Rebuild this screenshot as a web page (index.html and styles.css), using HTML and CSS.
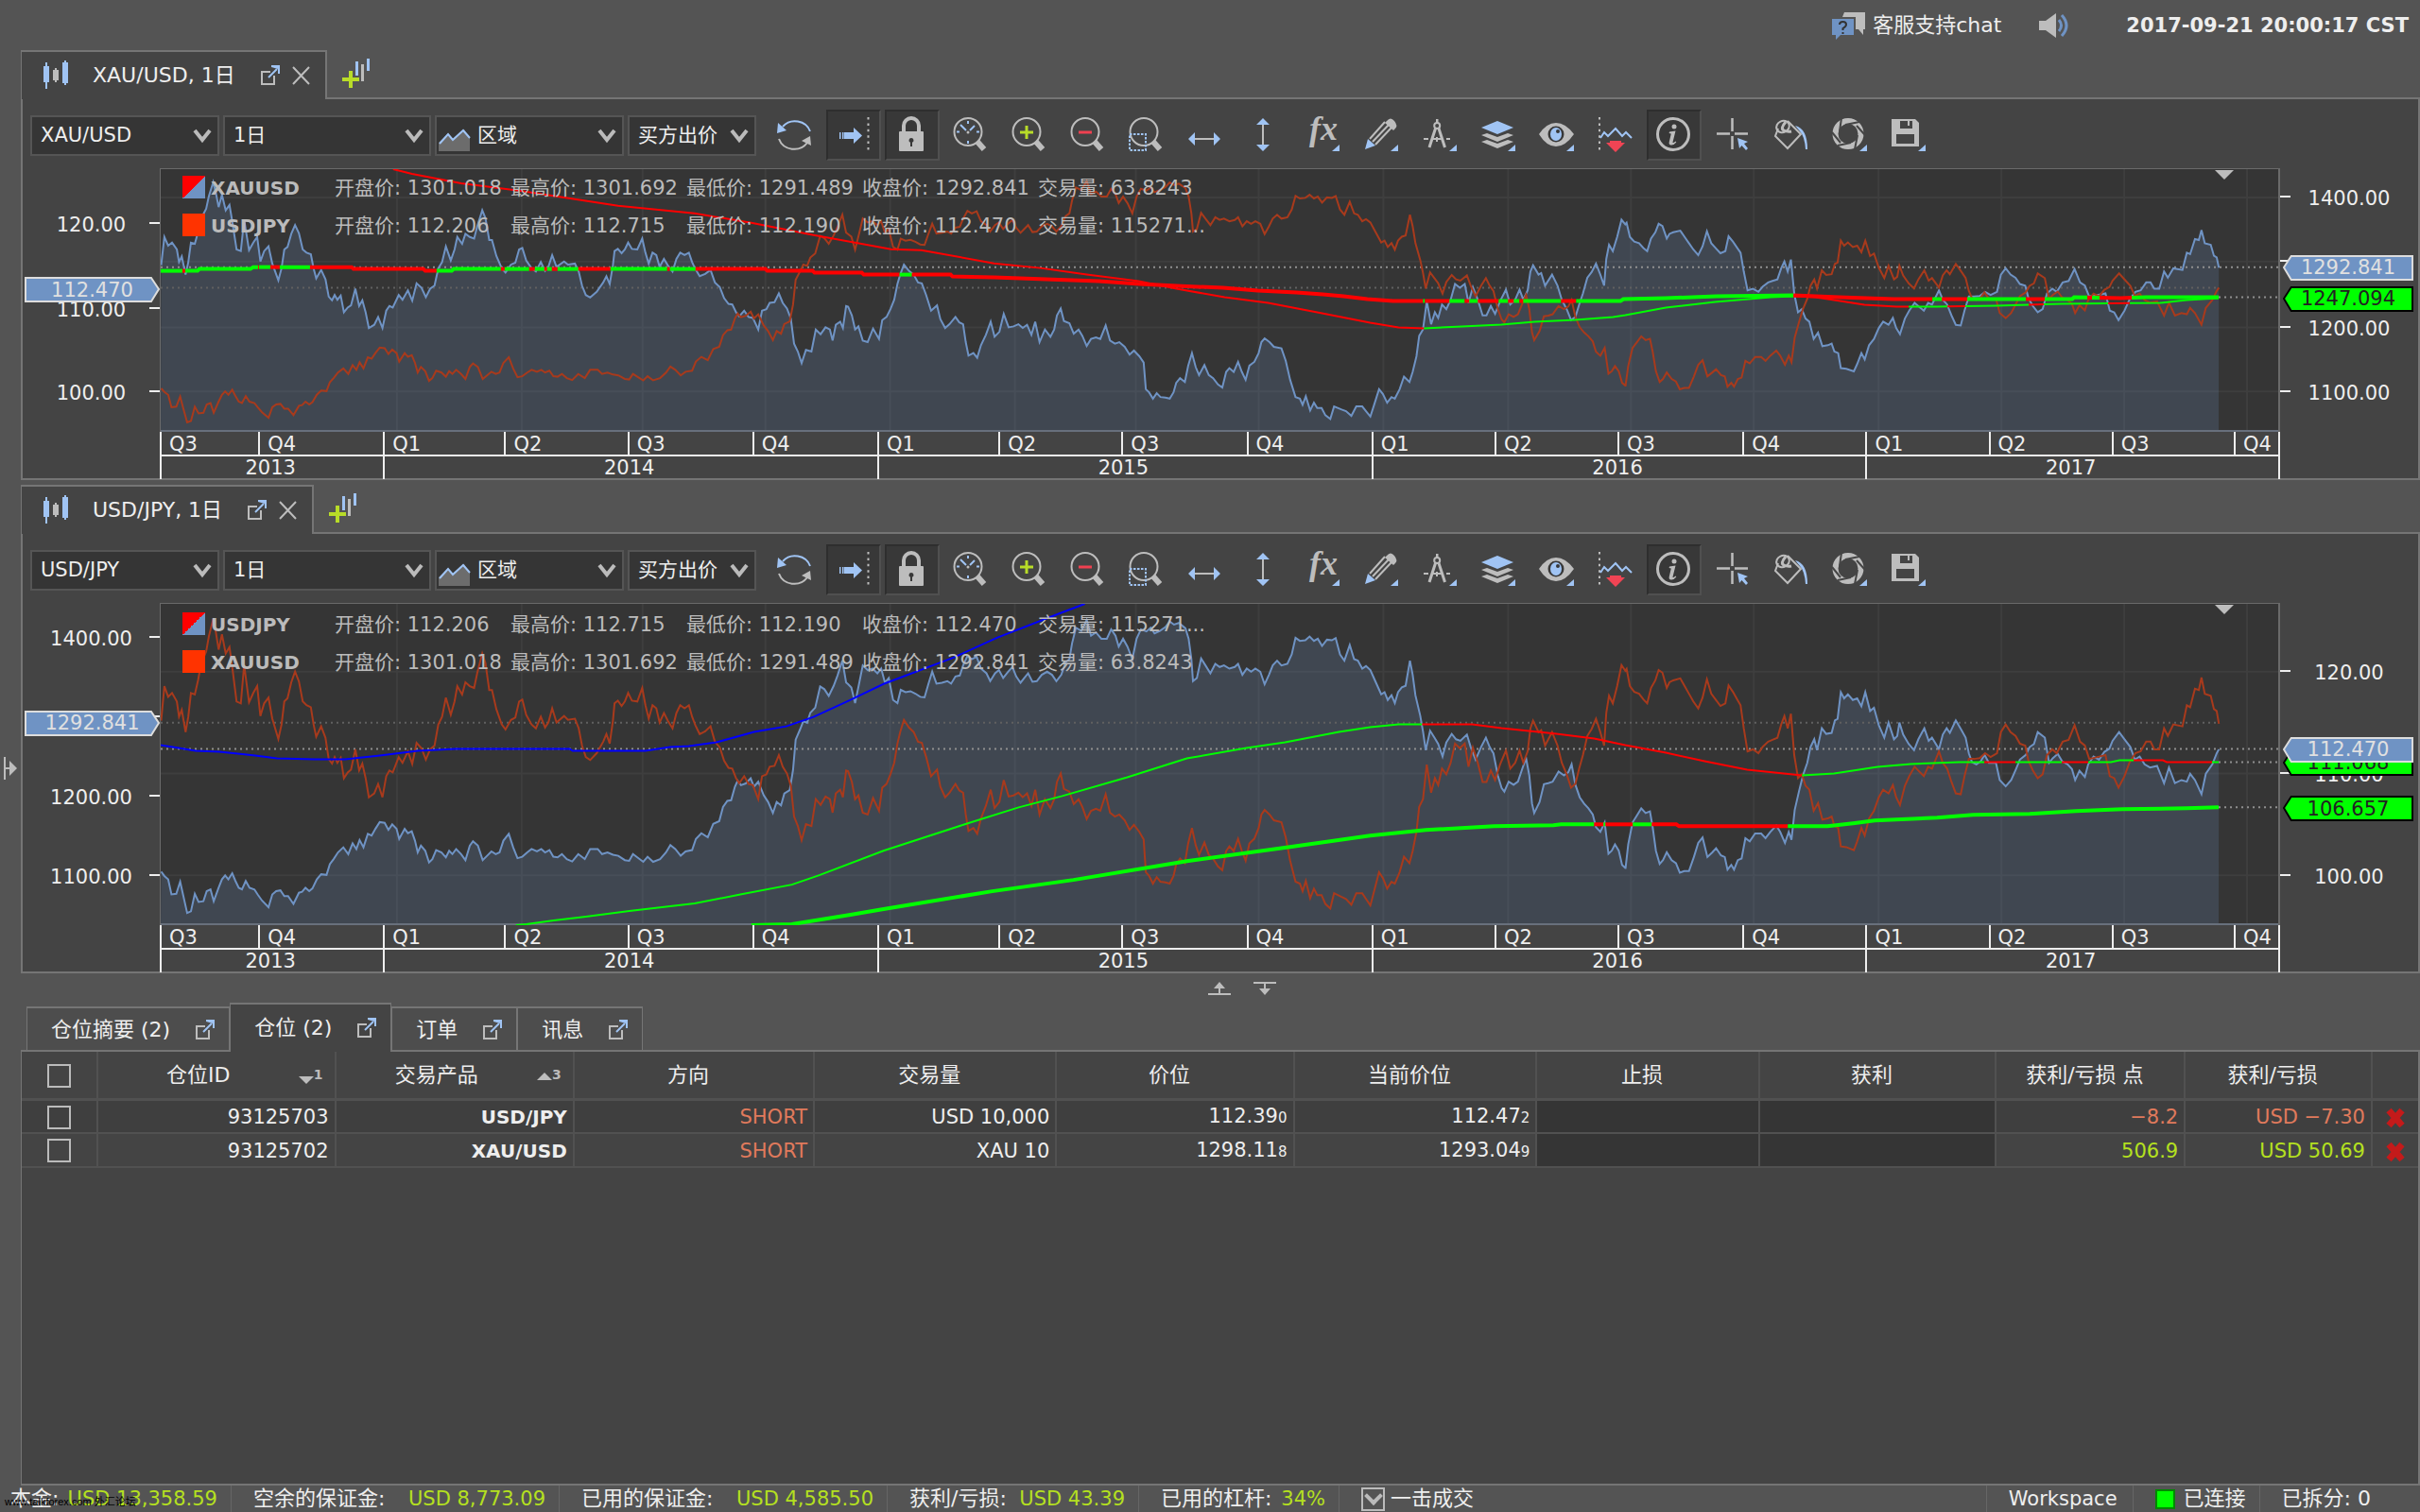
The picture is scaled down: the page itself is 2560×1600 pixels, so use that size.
FILE: index.html
```html
<!DOCTYPE html>
<html lang="zh-CN">
<head>
<meta charset="utf-8">
<title>Workspace</title>
<link rel="stylesheet" href="styles.css">
</head>
<body>
<svg class="sprite" aria-hidden="true">
  <symbol id="i-refresh" viewBox="0 0 36 36"><path class="sb" d="M34 14A17 16 0 0 0 5 9"/><path class="b" d="M0 5L-1 16L9 13Z"/><path class="sg" d="M1 22A17 16 0 0 0 31 26"/><path class="g" d="M34 19L35 29L25 24Z"/></symbol>
  <symbol id="i-shift" viewBox="0 0 36 36"><path class="b" d="M3 15h1.500v7H3zM6 15h1.500v7H6zM8 15h10V10l9 8.500L18 27v-5H8z"/><path class="sg" stroke-dasharray="2.500 3.900" d="M33.500-1V35"/></symbol>
  <symbol id="i-lock" viewBox="0 0 36 36"><rect class="g" x="4" y="14" width="26" height="21" rx="1"/><path class="sg" style="stroke-width:4" d="M9 14V8a8 8 0 0 1 16 0v6"/><path class="d" d="M17 21a2.500 2.500 0 0 1 1 4.800V30h-2v-4.200A2.500 2.500 0 0 1 17 21z"/></symbol>
  <symbol id="i-lens" viewBox="0 0 36 36"><circle class="sg" cx="15" cy="14.500" r="14.500"/><path class="sg" style="stroke-width:6" d="M25 25L32 33"/></symbol>
  <symbol id="i-time" viewBox="0 0 36 36"><use href="#i-lens"/><path class="sb" d="M7 7L13 13M17 13L22 8M15 3v3M15 24v3M3 14.500h3M24 14.500h3"/><circle class="g" cx="15" cy="15" r="1.500"/></symbol>
  <symbol id="i-zin" viewBox="0 0 36 36"><use href="#i-lens"/><path fill="none" stroke="#b8dc28" stroke-width="3" d="M8 15h14M15 8v14"/></symbol>
  <symbol id="i-zout" viewBox="0 0 36 36"><use href="#i-lens"/><path fill="none" stroke="#f04050" stroke-width="3" d="M8 15h14"/></symbol>
  <symbol id="i-zsel" viewBox="0 0 36 36"><use href="#i-lens"/><rect class="sb" stroke-dasharray="2.500 1.500" x="0" y="17" width="17" height="17"/></symbol>
  <symbol id="i-horiz" viewBox="0 0 36 36"><path class="sg" d="M6 22h23"/><path class="b" d="M0 22l7-7v14zM34 22l-7-7v14z"/></symbol>
  <symbol id="i-vert" viewBox="0 0 36 36"><path class="sg" d="M17 6v23"/><path class="b" d="M17 0l-7 7h14zM17 35l-7-7h14z"/></symbol>
  <symbol id="i-more" viewBox="0 0 36 36"><path class="b" d="M36 28v7h-8z"/></symbol>
  <symbol id="i-fx" viewBox="0 0 36 36"><text class="glyph" x="4" y="23" font-size="36">fx</text><use href="#i-more"/></symbol>
  <symbol id="i-pencil" viewBox="0 0 36 36"><path class="sg" d="M6 22L22 4M9 25L26 7M12 28L29 10"/><path class="g" d="M24 3q4-5 8 0t1 8l-2 2-9-8z"/><path class="b" d="M4 22l8 7L1 33z"/><use href="#i-more"/></symbol>
  <symbol id="i-compass" viewBox="0 0 36 36"><path class="g" d="M14 1h2.500v4H14z"/><circle class="sg" cx="15.200" cy="8" r="3"/><path class="sg" style="stroke-width:3" d="M13.500 11L7 31M17 11L23.500 31"/><path class="sg" d="M1 22h5M10 22h11M25 22h4M15 20v5"/><use href="#i-more"/></symbol>
  <symbol id="i-layers" viewBox="0 0 36 36"><path class="b" d="M17 3l17 7-17 7L0 10z"/><path class="g" d="M0 18l6-2 11 4 11-4 6 2-17 7zM0 25l6-2 11 4 11-4 6 2-17 7z"/><use href="#i-more"/></symbol>
  <symbol id="i-eye" viewBox="0 0 36 36"><path class="g" d="M-1 17Q7 5 17 5T36 17Q27 30 17 30T-1 17z"/><circle class="d" cx="17" cy="17" r="8.500"/><ellipse class="b" cx="17" cy="17" rx="6" ry="7"/><circle class="d" cx="19" cy="14" r="2"/><use href="#i-more"/></symbol>
  <symbol id="i-trend" viewBox="0 0 36 36"><path class="sg" stroke-dasharray="2.500 3.900" d="M1-1V35"/><path class="sb" d="M2 21l4-6 4 4 8-8 7 8 4-4 6 6"/><path fill="#f04454" d="M12 24h12v2h4L18 36 8 26h4z"/></symbol>
  <symbol id="i-info" viewBox="0 0 36 36"><circle class="sg" style="stroke-width:3" cx="17" cy="17" r="16.500"/><circle class="g" cx="18" cy="9" r="2.500"/><path class="g" d="M13 14.500l6.500-1-3 12q0 1.500 3-1l.8.900q-3 3.500-5.500 3.200-2.800-.4-2-3.500l2-8.500-2.200-.6z"/></symbol>
  <symbol id="i-cross" viewBox="0 0 36 36"><path class="sg" style="stroke-width:2.500" d="M17.500 0v14M17.500 19v14M1 16.500h14M20 16.500h14"/><path class="b" d="M23 21l11 4-4 2 4 5-2 2-4.500-5L25 32z"/></symbol>
  <symbol id="i-bucket" viewBox="0 0 36 36"><path class="b" d="M22 8q13 3 13 25h-2q-1-14-6-19z"/><path class="sg" d="M14 3L28 17 14 32 1 19 4 11"/><ellipse class="sg" cx="9" cy="9" rx="7" ry="6" transform="rotate(-25 9 9)"/><path class="sg" style="stroke-width:3" d="M12 4q-6 7-2 9t8 1"/></symbol>
  <symbol id="i-shot" viewBox="0 0 36 36"><circle cx="16" cy="16.500" r="13.500" fill="none" stroke="#bdbdbd" stroke-width="6"/><path d="M9 0l-2 14M28 4l-15 3M34 18L25 8M23 33l3-15M5 29l14-3M-1 15l9 11" fill="none" stroke="#454545" stroke-width="2"/><use href="#i-more"/></symbol>
  <symbol id="i-save" viewBox="0 0 36 36"><path class="g" fill-rule="evenodd" d="M0 1h25l4 4v25H0zM5 17v10h19V17zM9 3v8h13V3h-3v5h-2V3z"/><use href="#i-more"/></symbol>
  <symbol id="i-candles" viewBox="0 0 26 32"><path class="b" d="M0 6h6v17H0zM2 2h2v28H2zM20 2h6v22h-6zM22 0h2v26h-2z"/><path class="g" d="M10 10h6v11h-6zM12 8h2v15h-2z"/></symbol>
  <symbol id="i-pop" viewBox="0 0 22 22"><path class="sg" d="M11 7H2v13h13v-9"/><path class="sb" d="M9 13L18 4"/><path class="b" d="M12 0h9v9h-2V4l-7-2z"/></symbol>
  <symbol id="i-close" viewBox="0 0 20 20"><path class="sg" d="M1 1l17 18M18 1L1 19"/></symbol>
  <symbol id="i-newchart" viewBox="0 0 30 32"><path class="b" d="M14 3h3v15h-3zM26 0h3v13h-3z"/><path class="g" d="M20 6h3v18h-3z"/><path fill="#b8dc28" d="M0 20h7v-7h4v7h7v4h-7v7H7v-7H0z"/></symbol>
  <symbol id="i-chev" viewBox="0 0 20 14"><path d="M2 1l8 10 8-10" fill="none" stroke="#bbb" stroke-width="4"/></symbol>
  <symbol id="i-area" viewBox="0 0 34 24"><path fill="#6c6c6c" d="M0 15L10 5l5 6L27 1l6 9v14H0z"/><path class="sb" d="M1 16L10 6l5 6L26 2l7 8"/></symbol>
</svg>

<header class="topbar">
  <a class="chat" href="#chat">
    <svg class="chat-icon" viewBox="0 0 36 28"><path class="g" d="M13 0h22v18h-2v6l-5-6h-3V5H11z"/><path fill="#6f93c4" d="M0 7h23v17H9l-5 5v-5H0z"/><path d="M8 13q0-3 3.500-3t3.500 3q0 2-3.500 4v2M11.500 21v2" fill="none" stroke="#333" stroke-width="2"/></svg>
    客服支持chat</a>
  <button class="plain" aria-label="Sound"><svg class="sound-icon" viewBox="0 0 32 26"><path class="g" d="M0 8h7l11-8v26L7 18H0z"/><path d="M21 7q5 6 0 12M24 2q10 11 0 22" fill="none" stroke="#6f93c4" stroke-width="3"/></svg></button>
  <time class="clock">2017-09-21 20:00:17 CST</time>
</header>

<main class="work">
  <button class="rail" aria-label="Expand"><svg class="rail-icon" viewBox="0 0 14 24"><path class="sg" d="M1 0v24M1 12h6"/><path class="g" d="M6 4l8 8-8 8z"/></svg></button>
  <div class="stack">
    <div id="charts"></div>

    <div class="splitter">
      <button class="plain" aria-label="Up"><svg class="split-icon" viewBox="0 0 24 14"><path class="g" d="M12 0l6 7h-5v5h11v2H0v-2h11V7H6z"/></svg></button>
      <button class="plain" aria-label="Down"><svg class="split-icon" viewBox="0 0 24 14"><path class="g" d="M12 14l6-7h-5V2h11V0H0v2h11v5H6z"/></svg></button>
    </div>

    <nav class="tabs">
      <button class="tab">仓位摘要 (2)<svg class="pop"><use href="#i-pop"/></svg></button>
      <button class="tab active">仓位 (2)<svg class="pop"><use href="#i-pop"/></svg></button>
      <button class="tab">订单<svg class="pop"><use href="#i-pop"/></svg></button>
      <button class="tab">讯息<svg class="pop"><use href="#i-pop"/></svg></button>
    </nav>
    <section class="positions">
      <table>
        <colgroup><col style="width:3.150%"><col style="width:9.930%"><col style="width:9.950%"><col style="width:10.030%"><col style="width:10.110%"><col style="width:9.910%"><col style="width:10.130%"><col style="width:9.280%"><col style="width:9.900%"><col style="width:7.880%"><col style="width:7.800%"><col style="width:1.930%"></colgroup>
        <thead><tr>
          <th class="tick"><input type="checkbox" aria-label="全选"></th>
          <th class="sorted">仓位ID<span class="sort"><svg class="arrow" viewBox="0 0 16 8"><path class="g" d="M0 0h16L8 8z"/></svg><b>1</b></span></th>
          <th class="sorted">交易产品<span class="sort up"><svg class="arrow" viewBox="0 0 16 8"><path class="g" d="M0 8h16L8 0z"/></svg><b>3</b></span></th>
          <th>方向</th><th>交易量</th><th>价位</th><th>当前价位</th><th>止损</th><th>获利</th><th>获利/亏损 点</th><th>获利/亏损</th><th></th>
        </tr></thead>
        <tbody>
          <tr><td class="tick"><input type="checkbox" aria-label="93125703"></td><td>93125703</td><td class="pair">USD/JPY</td><td class="loss">SHORT</td><td>USD 10,000</td><td>112.39<small>0</small></td><td>112.47<small>2</small></td><td class="blank"></td><td class="blank"></td><td class="loss">−8.2</td><td class="loss">USD −7.30</td><td class="tick"><button class="plain" aria-label="平仓"><svg class="kill" viewBox="0 0 20 20"><path d="M3 2l14 16M17 2L3 18" stroke="#c41a1a" stroke-width="7"/></svg></button></td></tr>
          <tr><td class="tick"><input type="checkbox" aria-label="93125702"></td><td>93125702</td><td class="pair">XAU/USD</td><td class="loss">SHORT</td><td>XAU 10</td><td>1298.11<small>8</small></td><td>1293.04<small>9</small></td><td class="blank"></td><td class="blank"></td><td class="gain">506.9</td><td class="gain">USD 50.69</td><td class="tick"><button class="plain" aria-label="平仓"><svg class="kill" viewBox="0 0 20 20"><path d="M3 2l14 16M17 2L3 18" stroke="#c41a1a" stroke-width="7"/></svg></button></td></tr>
        </tbody>
      </table>
    </section>
  </div>
</main>

<footer class="status">
  <div class="cell equity">本金: <span class="gain">USD 13,358.59</span><span class="mark">www.talkforex.com 外汇论坛</span></div>
  <div class="cell margin">空余的保证金: <span class="gain">USD 8,773.09</span></div>
  <div class="cell margin">已用的保证金: <span class="gain">USD 4,585.50</span></div>
  <div class="cell profit">获利/亏损: <span class="gain">USD 43.39</span></div>
  <div class="cell lever">已用的杠杆: <span class="gain">34%</span></div>
  <label class="cell oneclick"><input type="checkbox" checked>一击成交</label>
  <div class="cell first-right">Workspace</div>
  <div class="cell"><i class="lamp"></i>已连接</div>
  <div class="cell split-count">已拆分: 0</div>
</footer>
<script src="charts.js"></script>
</body>
</html>
```
FILE: styles.css
```css
* { box-sizing: border-box; }
body {
  margin: 0;
  min-height: 100vh;
  display: flex;
  flex-direction: column;
  background: #545454;
  color: #eee;
  font: 21px/26px "DejaVu Sans", "Noto Sans CJK SC", sans-serif;
}
button, select, input { font: inherit; color: inherit; margin: 0; }
svg { display: block; overflow: visible; flex: none; }
symbol { overflow: visible; }
.sprite { display: none; }
.g { fill: #bdbdbd; }
.b { fill: #a0c4f4; }
.d { fill: #383838; }
.sg { fill: none; stroke: #bdbdbd; stroke-width: 2; }
.sb { fill: none; stroke: #a0c4f4; stroke-width: 2; }
.glyph { font-family: "Liberation Serif", serif; font-style: italic; font-weight: bold; fill: #bdbdbd; }
.plain { border: 0; background: none; padding: 0; }

.topbar {
  height: 53px;
  padding-right: 12px;
  display: flex;
  justify-content: flex-end;
  align-items: center;
}
.chat { display: flex; align-items: center; gap: 7px; color: inherit; text-decoration: none; font-size: 22px; }
.chat-icon { width: 36px; height: 28px; }
.sound-icon { width: 32px; height: 26px; margin: 0 60px 0 40px; }
.clock { font-weight: bold; white-space: nowrap; }

.work { flex: 1; display: flex; }
.rail { width: 22px; border: 0; padding: 0 4px; background: none; }
.rail-icon { width: 14px; height: 24px; }
.stack { flex: 1; min-width: 0; display: flex; flex-direction: column; }

/* chart window */
.tabrow { display: flex; height: 50px; }
.chart-tab {
  display: flex;
  align-items: center;
  padding: 0 15px 0 23px;
  background: #444;
  border: solid #757575;
  border-width: 2px 2px 0 1px;
  margin-bottom: -2px;
  z-index: 1;
  font-size: 22px;
}
.candles { width: 26px; height: 32px; margin-right: 26px; }
.chart-tab .pop { margin: 0 12px 0 26px; }
.close { width: 20px; height: 20px; }
.pop { width: 22px; height: 22px; }
.newchart { width: 30px; height: 32px; margin-left: 16px; }
.panel { background: #444; border: 2px solid #757575; margin-bottom: 5px; }
.second .panel { margin-bottom: 0; }
.toolbar { display: flex; gap: 4px; align-items: center; padding: 11px 8px 8px; }
.combo { position: relative; display: block; }
.combo select {
  appearance: none;
  display: block;
  width: 100%;
  height: 43px;
  padding: 0 9px;
  border: 2px solid #555;
  border-radius: 0;
  background: #353535;
}
.combo .chev { position: absolute; right: 8px; top: 15px; width: 20px; height: 14px; pointer-events: none; }
.combo .area { position: absolute; left: 4px; top: 14px; width: 34px; height: 24px; pointer-events: none; }
.w-symbol { width: 200px; }
.w-period { width: 220px; }
.w-type { width: 200px; }
.w-type select { padding-left: 43px; }
.w-side { width: 136px; margin-right: 8px; }
.tool { width: 58px; height: 54px; padding: 0; border: 2px solid transparent; background: none; display: grid; place-items: center; }
.tool.on { background: #383838; border-color: #2e2e2e #505050 #505050 #2e2e2e; }
.tool svg { width: 36px; height: 36px; }

.chart { display: grid; grid-template-columns: 145px 1fr 146px; }
.scale, .plot { position: relative; }
.plot { border: solid #6a6a6a; border-width: 1px 2px 0 1px; background: #353535; height: 279px; }
.second .plot { height: 341px; }
.canvas { width: 100%; height: 100%; overflow: hidden; }
.canvas * { vector-effect: non-scaling-stroke; }
.label { position: absolute; left: 0; right: 0; text-align: center; margin-top: -11px; }
.label::before { content: ""; position: absolute; top: 10px; width: 11px; height: 2px; background: #eee; }
.left .label::before { right: 0; }
.right .label::before { left: 0; }
.tag { position: absolute; height: 27px; margin-top: -13px; display: grid; place-items: center; }
.left .tag { left: 2px; right: 0; }
.right .tag { left: 3px; right: 5px; }
.tag svg { position: absolute; inset: 0; width: 100%; height: 100%; }
.tag span { position: relative; }
.tag.blue { z-index: 1; color: #e0e0e0; }
.tag.green { color: #222; }
.legend { position: absolute; left: 23px; top: 0; padding-top: 7px; color: #bbb; }
.second .legend { padding-top: 9px; }
.legend p { margin: 0; height: 40px; display: grid; grid-template-columns: 24px 137px repeat(4, 186px) auto; white-space: nowrap; }
.legend b { font-size: 20px; padding-left: 6px; }
.swatch { width: 24px; height: 24px; background: #ff3300; }
.swatch.main { background: linear-gradient(135deg, red 50%, #6f93c4 50%); }
.marker { position: absolute; right: 47px; top: 1px; width: 20px; height: 10px; }

.quarters, .years { grid-column: 2; display: grid; line-height: 24px; }
.quarters { height: 26px; border-bottom: 2px solid #eee; grid-template-columns: 104fr 132fr 128fr 130fr 132fr 132fr 128fr 130fr 132fr 132fr 130fr 130fr 132fr 130fr 130fr 130fr 129fr 49fr; }
.years { height: 23px; grid-template-columns: 236fr 522fr 522fr 522fr 438fr; text-align: center; }
.quarters span { border-left: 2px solid #eee; padding-left: 8px; min-width: 0; padding-top: 2px; line-height: 22px; }
.years span { border-left: 2px solid #eee; padding-right: 4px; }
.quarters span:last-child, .years span:last-child { border-right: 2px solid #eee; }

.splitter { height: 31px; display: flex; justify-content: center; align-items: center; gap: 24px; padding-left: 46px; }
.split-icon { width: 24px; height: 14px; }

/* positions */
.tabs { display: flex; align-items: flex-end; height: 50px; padding-left: 6px; font-size: 22px; }
.tab {
  height: 46px;
  display: flex;
  align-items: center;
  gap: 26px;
  padding: 2px 14px 0 25px;
  white-space: nowrap;
  background: #4d4d4d;
  border: solid #757575;
  border-width: 2px 1px 0;
}
.tab.active { height: 52px; background: #444; margin-bottom: -2px; padding-top: 0; z-index: 1; }
.positions { flex: 1; background: #444; border: 2px solid #757575; border-left-width: 1px; }
table { width: 100%; table-layout: fixed; border-collapse: collapse; }
th, td { border: 2px solid #515151; padding: 1px 6px 0; text-align: right; white-space: nowrap; }
tr > :first-child { border-left: 0; }
tr > :last-child { border-right: 0; }
th { height: 50px; border-top: 0; border-bottom: 3px solid #515151; font-weight: normal; font-size: 22px; text-align: center; padding-right: 18px; }
th.sorted { position: relative; padding-right: 44px; }
.sort { position: absolute; right: 12px; top: 11px; display: flex; align-items: center; color: #bbb; font-size: 14px; }
.arrow { width: 16px; height: 8px; margin-top: 12px; }
.sort.up .arrow { margin-top: 4px; }
td { height: 36px; }
tbody tr:first-child td { background: #3f3f3f; }
tbody td.blank, tbody tr:first-child td.blank { background: #353535; }
.tick, th.tick { padding: 0; text-align: center; }
.tick input, .oneclick input {
  appearance: none;
  width: 25px;
  height: 25px;
  border: 2px solid #bbb;
  vertical-align: middle;
}
.pair { font-weight: bold; font-size: 20px; }
small { font-size: 15px; }
.loss { color: #e07a5c; }
.gain { color: #b4e020; }
.kill { width: 22px; height: 20px; margin: 2px auto 0; }
.tick .plain { vertical-align: middle; }

.status { display: flex; height: 28px; line-height: 28px; overflow: hidden; font-size: 22px; }
.status .gain, .first-right { font-size: 21px; }
.cell { display: flex; align-items: center; justify-content: space-between; gap: 9px; padding: 0 14px 0 23px; border-right: 1px solid #666; white-space: nowrap; }
.equity { position: relative; width: 245px; padding-left: 11px; }
.margin { width: 347px; }
.profit { width: 266px; }
.lever { width: 212px; }
.oneclick { gap: 6px; border: 0; }
.oneclick input { display: grid; place-items: center; }
.oneclick input::before { content: ""; width: 10px; height: 10px; border: solid #bbb; border-width: 0 4px 4px 0; transform: translateY(-3px) rotate(45deg); }
.first-right { margin-left: auto; border-left: 1px solid #666; padding-right: 16px; }
.lamp { width: 21px; height: 21px; background: #0f0; border: 2px solid #080; }
.split-count { border: 0; padding-right: 52px; }
.mark { position: absolute; left: 5px; top: 8px; font: 11px/18px "Liberation Sans", "Noto Sans CJK SC", sans-serif; color: #000; }
```
FILE: charts.js
```js
// Price traces, stored in three sections. Each section: origin x, origin y, units per px vertically, points.
const UX = 1568 / 900;
const GOLD = [
[0,0,3,"297,840 303,750 310,778 317,768 326,790 330,830 335,812 342,870 347,830 352,768 359,772 365,735 371,690 380,660 385,620 393,575 398,610 403,655 409,615 416,665 423,648 428,700 436,790 444,795 450,695 459,792 467,768 474,750 480,828 487,795 495,780 502,835 513,888 519,850 524,790 530,782 537,740 544,712 551,738 558,790 565,800 573,805 578,850 583,882 592,855 600,885 606,940 612,952 617,935 622,950 628,937 634,990 641,975 647,968 655,915 662,970 668,952 674,990 680,1040 690,1030 697,1005 705,1040 712,985 718,970 724,975 735,935 742,950 752,920 760,953 768,898 777,912 785,942 793,915 801,905 808,850 815,830 822,780 831,825 838,790 843,750 852,772 858,740 866,750 874,755 880,715 889,665 895,690 902,760 907,760 915,810 925,850 932,863 942,838 950,832 957,790 963,785 970,825 980,850 988,860 997,830 1005,858 1011,845 1018,808 1026,845 1040,828 1047,838 1060,835 1067,860 1073,905 1080,935 1088,943 1100,925 1112,895 1118,875 1124,900 1130,840 1133,795 1139,788 1146,802 1152,790 1158,768 1165,788 1175,790 1184,755 1190,800 1196,835 1203,800 1210,808 1216,845 1224,820 1231,840 1240,860 1247,820 1254,800 1262,808 1270,800 1276,830 1282,852 1290,875 1300,868 1310,855 1318,895 1327,910 1335,945 1343,963 1350,965 1357,990 1363,1003 1372,985 1380,1005 1388,1008 1398,1045 1405,985 1413,980 1419,960 1428,958 1436,930 1443,960 1451,978 1458,1010 1464,1090 1471,1115 1478,1152 1486,1110 1496,1115 1504,1045 1513,1060 1522,1038 1530,1045 1535,1080 1541,1030 1549,1020 1554,1040 1560,970"],
[820,100,3,"135,672 142,700 148,745 154,735 162,780 171,785 181,742 192,775 198,715 206,705 213,680 220,650 226,600 231,570 238,538 247,558 256,570 264,595 271,598 279,635 288,685 299,668 305,712 314,740 322,728 333,705 340,722 347,728 352,785 357,828 366,820 373,835 380,795 389,762 398,720 405,768 414,752 422,695 431,738 440,735 449,728 457,740 465,730 473,762 480,720 488,785 498,745 508,768 515,745 520,700 527,678 533,718 543,725 551,758 560,745 567,765 575,797 583,775 592,770 600,775 610,732 618,780 627,790 635,785 645,800 654,825 662,812 672,830 680,850 684,935 690,945 697,965 704,948 711,960 720,962 728,965 735,945 740,915 747,900 756,912 762,860 769,820 776,865 782,890 792,858 800,890 808,900 817,920 825,930 832,880 838,868 846,880 854,848 861,880 868,905 875,860 884,848 892,820 897,785 903,773 912,785 920,800 934,805 942,845 950,905 960,960 968,965 973,985 979,958 987,1003 994,978 1000,995 1008,995 1015,1018 1024,1030 1031,990 1045,1000 1053,1005 1063,1020 1072,990 1083,990 1090,1005 1098,1022 1105,985 1114,935 1121,950 1129,978 1137,960 1143,965 1152,935 1160,895 1170,912 1176,880 1183,830 1188,765 1195,745 1202,655 1210,728 1217,690 1223,708 1230,665 1238,680 1246,650 1254,600 1263,612 1272,600 1279,660 1287,610 1296,650 1305,700 1312,700 1320,670 1328,695 1337,655 1348,618 1356,665 1365,650 1373,618 1380,650 1388,620 1393,560 1398,540 1408,570 1413,565 1420,605 1433,570 1443,605 1451,650 1460,680 1468,715 1476,705 1483,665 1490,630 1498,580 1506,562 1514,535 1522,570 1529,605 1533,520 1538,475 1545,495 1553,450 1561,395 1568,410"],
[1660,0,3,"107,705 113,750 121,765 130,770 138,785 145,795 152,755 160,735 166,708 173,715 181,755 186,740 193,735 206,730 214,750 222,770 230,790 239,808 247,780 255,732 263,770 271,785 280,802 289,795 295,748 303,765 311,785 317,800 323,860 330,920 340,915 350,925 358,908 368,895 376,890 385,885 392,850 398,828 404,860 410,822 416,930 423,990 430,980 437,1010 444,1020 452,1075 460,1055 468,1098 478,1095 485,1090 490,1115 497,1120 502,1168 512,1170 526,1178 532,1155 540,1120 546,1140 554,1095 563,1075 572,1040 580,1020 590,1030 598,1008 604,1040 611,1060 620,1010 628,985 638,960 646,972 655,985 663,960 670,965 683,920 690,950 698,965 706,1000 714,1030 723,1032 730,985 738,940 748,940 758,938 768,925 778,935 790,925 797,870 806,850 815,870 824,880 832,900 842,905 848,945 856,970 865,990 874,980 882,930 892,915 900,925 911,895 922,890 933,852 943,895 952,905 960,940 975,935 990,930 998,985 1006,990 1014,1015 1025,985 1034,950 1045,925 1055,920 1065,895 1073,895 1080,915 1089,915 1098,860 1105,880 1115,850 1132,855 1140,800 1146,805 1155,757 1162,760 1167,728 1173,770 1184,775 1190,810 1195,815 1199,848"]];
const YEN = [
[0,500,2.8,"297,1182 303,1195 310,1205 316,1250 325,1248 332,1212 338,1255 345,1305 352,1300 359,1248 366,1272 375,1270 381,1240 388,1235 394,1270 403,1230 409,1205 415,1193 421,1205 428,1187 434,1210 440,1230 446,1235 453,1210 460,1230 469,1235 475,1250 483,1268 495,1288 502,1250 509,1240 517,1238 524,1255 531,1255 541,1278 551,1245 557,1242 563,1230 570,1240 576,1232 584,1205 592,1190 602,1192 608,1160 615,1145 623,1125 633,1110 642,1130 650,1098 657,1115 663,1088 670,1110 678,1070 685,1075 692,1055 700,1035 709,1037 716,1058 723,1042 731,1055 736,1085 746,1055 752,1068 759,1062 765,1090 770,1125 776,1105 784,1120 791,1155 797,1145 804,1118 814,1125 822,1140 828,1120 834,1130 841,1115 850,1130 858,1148 866,1105 872,1092 881,1105 890,1148 898,1135 906,1122 914,1130 921,1125 928,1090 938,1070 946,1110 954,1142 963,1138 972,1125 980,1115 990,1122 998,1115 1005,1125 1013,1118 1020,1138 1028,1140 1036,1130 1045,1145 1055,1152 1066,1130 1078,1145 1088,1115 1102,1115 1110,1130 1120,1125 1130,1132 1140,1135 1152,1148 1160,1150 1167,1130 1175,1140 1186,1153 1194,1138 1204,1153 1217,1145 1228,1125 1236,1103 1245,1115 1255,1135 1264,1122 1276,1118 1283,1085 1293,1068 1305,1080 1315,1040 1326,1032 1333,990 1341,972 1348,970 1355,930 1360,912 1366,925 1375,920 1384,905 1390,930 1398,915 1408,955 1416,975 1425,1008 1432,975 1440,985 1446,950 1456,940 1462,880 1467,790 1475,760 1481,735 1488,740 1494,710 1503,695 1512,632 1520,640 1528,660 1537,630 1544,600 1553,555 1560,620"],
[820,560,3,"135,490 141,500 148,550 155,490 162,430 171,445 180,440 189,455 196,440 203,485 210,470 218,540 226,550 232,508 241,515 250,512 259,520 268,530 276,532 283,490 290,450 298,488 308,485 318,480 325,488 333,465 341,462 347,430 355,400 363,410 372,402 380,440 390,455 397,480 406,455 413,445 421,470 430,450 438,435 445,465 453,485 460,470 467,455 475,482 483,480 492,460 502,450 511,460 519,480 528,460 536,420 543,410 548,360 555,310 565,320 575,285 583,335 592,325 602,345 612,345 620,315 628,335 634,370 642,345 650,370 659,410 667,345 675,315 685,322 693,310 700,328 710,320 720,308 728,290 736,300 745,295 757,312 763,345 768,410 771,480 778,470 786,408 794,430 803,455 812,425 820,435 828,430 838,440 848,435 854,425 862,460 870,440 878,450 886,440 895,450 903,490 911,460 918,430 926,415 934,430 945,425 953,395 960,342 968,352 978,350 986,338 994,352 1001,345 1009,368 1018,348 1027,350 1034,343 1042,395 1050,415 1060,365 1068,410 1075,415 1083,440 1090,432 1098,445 1107,480 1118,522 1124,515 1130,540 1137,525 1143,550 1149,515 1156,500 1163,495 1171,415 1176,460 1181,525 1190,590 1195,640 1200,700 1208,638 1216,660 1223,680 1231,720 1238,675 1248,648 1256,665 1264,670 1276,650 1283,690 1292,730 1302,690 1311,660 1318,690 1325,710 1333,780 1340,820 1345,832 1353,800 1362,810 1370,800 1378,760 1385,725 1391,780 1396,870 1400,900 1410,865 1418,808 1426,805 1434,800 1445,768 1455,780 1463,770 1469,745 1476,810 1484,850 1492,870 1500,885 1508,905 1514,945 1522,960 1530,930 1537,1030 1543,1020 1549,1000 1556,1020 1562,1065 1568,1075"],
[1660,560,3,"105,1075 110,1000 118,930 127,905 134,885 142,900 150,895 155,945 161,1020 168,1062 174,1050 181,1025 190,1050 198,1060 205,1090 213,1085 222,1085 231,1040 239,995 247,978 256,1040 265,1025 272,1012 281,1035 288,1040 293,1080 300,1065 305,1080 312,1050 319,1045 326,980 334,990 344,965 355,965 363,980 372,960 383,940 390,960 399,995 406,960 411,985 417,890 425,830 432,780 440,740 446,690 453,665 458,700 467,630 475,648 485,645 491,605 496,600 502,515 508,535 515,522 524,540 532,535 540,560 547,515 556,575 563,565 572,620 582,660 590,612 600,665 606,655 610,612 617,650 627,680 637,700 645,665 656,630 664,670 670,660 683,697 690,650 697,630 703,645 714,605 724,635 732,660 738,710 744,738 752,745 760,735 767,715 775,740 788,740 795,795 806,815 816,795 825,760 832,730 843,715 850,690 858,680 865,642 878,660 886,740 893,725 902,712 910,735 920,745 928,760 934,795 942,765 952,785 958,745 968,720 978,730 988,705 997,695 1003,670 1015,642 1027,670 1036,690 1044,730 1053,720 1062,745 1072,755 1085,750 1098,805 1107,755 1118,805 1130,795 1140,800 1146,775 1155,795 1167,840 1175,775 1187,745 1195,710 1199,697"]];

const R = "#ff0000", G = "#00ff00";
const parse = s => s.split(" ").map(p => p.split(",").map(Number));
const trace = parts => parts.flatMap(([ox, oy, k, s]) => parse(s).map(([x, y]) => [ox + x / UX, oy + y / k]));
const gold = trace(GOLD), yen = trace(YEN);
const str = pts => pts.map(([x, y]) => x.toFixed(1) + "," + y.toFixed(1)).join(" ");

// Splits an average line into coloured runs; each stop is the x where its run ends.
function average(path, width, first, stops) {
  const pts = parse(path);
  const at = x => {
    const i = Math.max(1, pts.findIndex(p => p[0] >= x));
    const [a, b] = [pts[i - 1], pts[i]];
    return [x, a[1] + (b[1] - a[1]) * (x - a[0]) / (b[0] - a[0])];
  };
  let from = pts[0][0], colour = first, out = "";
  for (const to of [...stops, pts[pts.length - 1][0]]) {
    const run = [at(from), ...pts.filter(p => p[0] > from && p[0] < to), at(to)];
    out += `<polyline points="${str(run)}" fill="none" stroke="${colour}" stroke-width="${width}"/>`;
    from = to;
    colour = colour === R ? G : R;
  }
  return out;
}

const quote = {
  gold: ["XAUUSD", "开盘价: 1301.018", "最高价: 1301.692", "最低价: 1291.489", "收盘价: 1292.841", "交易量: 63.8243"],
  yen: ["USDJPY", "开盘价: 112.206", "最高价: 112.715", "最低价: 112.190", "收盘价: 112.470", "交易量: 115271..."]
};

const charts = [
  { symbol: "XAU/USD", cls: "first", top: 178, height: 279, main: gold, legend: ["gold", "yen"],
    other: yen.map(([x, y]) => [x, 236 + (y - 710) * 0.824]),
    rows: [208, 276, 346, 414], dots: [[170, 282, 2411, "#909090"], [170, 304, 2348, "#606060"], [2348, 314, 2411, "#909090"]],
    left: [[236, "120.00"], [326, "110.00"], [414, "100.00"]],
    right: [[208, "1400.00"], [276, ""], [346, "1200.00"], [414, "1100.00"]],
    leftTags: [[306, "112.470", "blue"]],
    rightTags: [[283, "1292.841", "blue"], [316, "1247.094", "green"]],
    lines: average("416,178 436,183 488,193 551,201 597,208 654,217 735,225 795,235 861,248 943,263 975,264 1052,278 1101,283 1150,290 1205,297 1245,305 1296,314 1342,320 1394,330 1450,341 1480,346 1507,347 1547,345 1589,343 1624,340 1667,338 1707,335 1720,333 1763,325 1815,319 1874,314 1898,313 1921,314 1941,317 1973,322 2007,324 2050,324 2113,323 2182,321 2286,320 2314,317 2348,315", 2, R, [1507, 1898, 2020, 2061, 2080, 2147, 2163, 2231, 2254]) +
      average("170,286 209,286 211,284 265,284 268,282 372,282 374,284 448,284 450,286 478,286 480,284 810,284 812,286 860,286 862,288 912,288 914,290 1006,290 1008,292 1052,293 1107,295 1163,297 1206,300 1245,302 1294,304 1331,307 1372,309 1400,311 1422,313 1447,316 1474,318 1715,318 1718,316 1763,315 1816,313 1898,312 1946,314 2004,316 2193,316 2195,314 2244,315 2271,314 2348,314", 4, G, [193, 196, 273, 274, 286, 296, 328, 462, 530, 534, 560, 566, 576, 579, 584, 590, 612, 646, 706, 709, 736, 952, 965, 1506, 1508, 1534, 1550, 1555, 1564, 1586, 1596, 1602, 1608, 1612, 1652, 1668, 1898, 2045, 2055, 2082, 2144, 2164, 2209, 2214, 2222, 2256]) },
  { symbol: "USD/JPY", cls: "second", top: 638, height: 341, main: yen, legend: ["yen", "gold"],
    other: gold.map(([x, y]) => [x, 674 + (y - 208) * 1.221]),
    rows: [710, 818, 926], dots: [[170, 764, 2348, "#606060"], [170, 792, 2411, "#909090"], [2348, 806, 2411, "#909090"], [2348, 854, 2411, "#909090"]],
    left: [[674, "1400.00"], [758, ""], [842, "1200.00"], [926, "1100.00"]],
    right: [[710, "120.00"], [818, "110.00"], [926, "100.00"]],
    leftTags: [[765, "1292.841", "blue"]],
    rightTags: [[807, "111.068", "green"], [793, "112.470", "blue"], [855, "106.657", "green"]],
    lines: `<polyline fill="none" stroke="#0000ff" stroke-width="2" points="170,788 189,791 207,794 232,795 270,799 293,802 333,803 365,803 402,799 442,794 482,792 603,792 606,794 683,794 709,790 729,789 758,785 798,774 832,768 861,758 900,740 935,723 1009,695 1055,674 1119,649 1148,638"/>` +
      average("546,979 557,978 586,974 620,970 666,964 735,956 786,946 838,936 867,926 935,900 1021,872 1078,854 1124,842 1193,822 1256,802 1319,791 1360,785 1417,774 1450,769 1480,766 1558,766 1589,770 1647,776 1687,781 1720,788 1763,796 1804,805 1849,814 1907,820 1941,818 1987,811 2022,808 2073,806 2234,806 2243,804 2289,804 2293,806 2348,806", 2, G, [1505, 1907, 2100, 2133, 2182, 2210, 2258, 2341]) +
      average("795,979 838,978 900,968 935,962 1050,943 1136,931 1256,911 1365,896 1450,884 1509,878 1581,874 1644,873 1652,872 1774,872 1777,874 1934,874 1961,871 1984,868 2050,865 2088,862 2148,861 2197,858 2246,856 2314,855 2348,854", 4, G, [1687, 1697, 1699, 1728, 1748, 1892]) }
];

const columns = [420, 552, 680, 810, 942, 1074, 1202, 1332, 1464, 1596, 1726, 1856, 1988, 2118, 2248, 2378];
const tools = [["refresh"], ["shift", 1], ["lock", 1], ["time"], ["zin"], ["zout"], ["zsel"], ["horiz"], ["vert"], ["fx"], ["pencil"], ["compass"], ["layers"], ["eye"], ["trend"], ["info", 1], ["cross"], ["bucket"], ["shot"], ["save"]];
const combo = (cls, name, text, extra = "") => `<label class="combo ${cls}">${extra}<select aria-label="${name}"><option>${text}</option></select><svg class="chev"><use href="#i-chev"/></svg></label>`;
const quarters = ["Q3", "Q4", "Q1", "Q2", "Q3", "Q4", "Q1", "Q2", "Q3", "Q4", "Q1", "Q2", "Q3", "Q4", "Q1", "Q2", "Q3", "Q4"];

document.getElementById("charts").innerHTML = charts.map(c => {
  const pc = y => `top:${((y - c.top) / c.height * 100).toFixed(2)}%`;
  const shape = { left: "M1 1H133L141 13L133 26H1Z", right: "M141 1H9L1 13L9 26H141Z" };
  // The scale columns are as tall as the plot, so both share one vertical percentage.
  const scale = (side, labels, tags) => `<div class="scale ${side}">` +
    labels.map(([y, t]) => `<div class="label" style="${pc(y)}">${t || "&nbsp;"}</div>`).join("") +
    tags.map(([y, t, k]) => `<div class="tag ${k}" style="${pc(y)}"><svg viewBox="0 0 142 27" preserveAspectRatio="none"><path d="${shape[side]}" fill="${k === "blue" ? "#6f93c4" : G}" stroke="${k === "blue" ? "#ddd" : "#000"}" stroke-width="2"/></svg><span>${t}</span></div>`).join("") + "</div>";
  const base = c.top + c.height;
  const svg = `<svg class="canvas" viewBox="170 ${c.top} 2241 ${c.height}" preserveAspectRatio="none">
    <path d="${c.rows.map(y => `M170 ${y}H2411`).join("")}${columns.map(x => `M${x} ${c.top}V${base}`).join("")}" stroke="#3e3e3e" stroke-width="2"/>
    <polygon points="170,${base} ${str(c.main)} 2348,${base}" fill="#6f93c4" fill-opacity="0.2"/>
    <path d="M170 ${base - 1}H2411" stroke="#68707c" stroke-width="2"/>
    ${c.dots.map(([a, y, b, k]) => `<path d="M${a} ${y}H${b}" stroke="${k}" stroke-width="2" stroke-dasharray="2 4"/>`).join("")}
    <polyline points="${str(c.main)}" fill="none" stroke="#6f93c4" stroke-width="2"/>
    <polyline points="${str(c.other)}" fill="none" stroke="#a83a1c" stroke-width="2"/>
    ${c.lines}</svg>`;
  return `<section class="${c.cls}">
    <div class="tabrow"><div class="chart-tab"><svg class="candles"><use href="#i-candles"/></svg>${c.symbol}, 1日
      <button class="plain" aria-label="Detach"><svg class="pop"><use href="#i-pop"/></svg></button><button class="plain" aria-label="Close"><svg class="close"><use href="#i-close"/></svg></button></div>
      <button class="plain" aria-label="New chart"><svg class="newchart"><use href="#i-newchart"/></svg></button></div>
    <div class="panel"><div class="toolbar">
      ${combo("w-symbol", "交易产品", c.symbol)}${combo("w-period", "周期", "1日")}${combo("w-type", "类型", "区域", '<svg class="area"><use href="#i-area"/></svg>')}${combo("w-side", "价格", "买方出价")}
      ${tools.map(([t, on]) => `<button class="tool${on ? " on" : ""}" aria-label="${t}"><svg><use href="#i-${t}"/></svg></button>`).join("")}</div>
      <div class="chart">${scale("left", c.left, c.leftTags)}
        <div class="plot">${svg}<div class="legend">${c.legend.map((k, i) => `<p><i class="swatch${i ? "" : " main"}"></i><b>${quote[k][0]}</b>${quote[k].slice(1).map(t => `<span>${t}</span>`).join("")}</p>`).join("")}</div>
        <svg class="marker" viewBox="0 0 20 10"><path class="g" d="M0 0h20L10 10z"/></svg></div>
        ${scale("right", c.right, c.rightTags)}
        <div class="quarters">${quarters.map(q => `<span>${q}</span>`).join("")}</div>
        <div class="years">${[2013, 2014, 2015, 2016, 2017].map(y => `<span>${y}</span>`).join("")}</div>
      </div></div></section>`;
}).join("");
```
